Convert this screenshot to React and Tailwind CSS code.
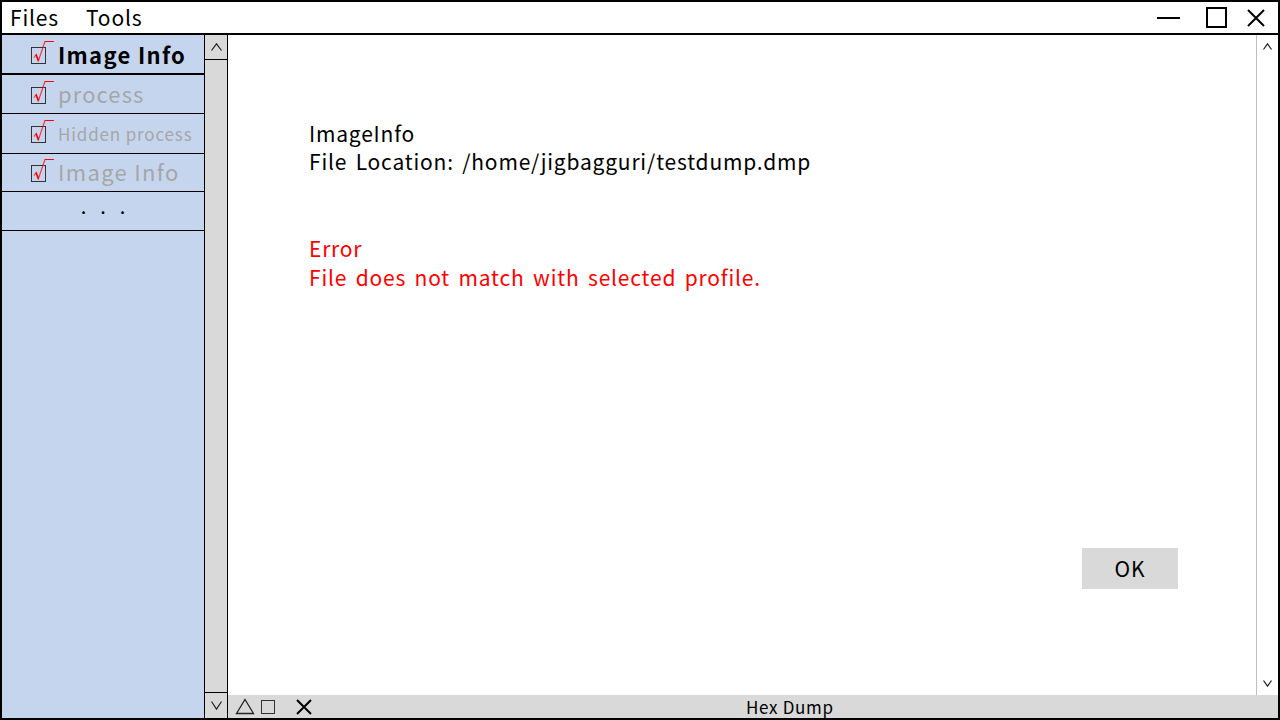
import { useState } from 'react'

const font = { fontFamily: '"Noto Sans CJK KR", "Noto Sans", sans-serif' }

function Check() {
  return (
    <span className="relative inline-block w-[15px] h-[17px] border border-[#333] bg-[#c5d5ee] shrink-0 mt-[2px]">
      <span className="absolute left-[1px] top-[-8px] text-[21px] leading-none text-[#ff0000]">√</span>
    </span>
  )
}

function Chevron({ up, w = 10, h = 7 }) {
  return (
    <svg width={w} height={h} viewBox={`0 0 ${w} ${h}`}>
      <path
        d={up ? `M0.5 ${h - 0.5} L${w / 2} 0.8 L${w - 0.5} ${h - 0.5}` : `M0.5 0.5 L${w / 2} ${h - 0.8} L${w - 0.5} 0.5`}
        fill="none"
        stroke="#222"
        strokeWidth="1.2"
      />
    </svg>
  )
}

export default function App() {
  const [items] = useState([
    { label: 'Image Info', cls: 'text-[22px] font-bold text-black tracking-[0.06em]', h: 'h-[40px] border-b-2' },
    { label: 'process', cls: 'text-[22px] text-[#a6a6a6] tracking-[0.05em] -mt-[2px]', h: 'h-[39px] border-b' },
    { label: 'Hidden process', cls: 'text-[17px] text-[#a6a6a6] tracking-[0.05em]', h: 'h-[40px] border-b' },
    { label: 'Image Info', cls: 'text-[22px] text-[#a6a6a6] tracking-[0.06em] -mt-[3px]', h: 'h-[38px] border-b' },
  ])

  return (
    <div style={font} className="w-[1280px] h-[720px] flex flex-col bg-white border-2 border-black overflow-hidden">
      {/* title / menu bar */}
      <div className="h-[33px] shrink-0 flex items-center border-b-2 border-black">
        <span className="ml-[8px] text-[21px] leading-none tracking-[0.04em]">Files</span>
        <span className="ml-[27px] text-[21px] leading-none tracking-[0.04em]">Tools</span>
        <div className="ml-auto flex items-center h-full">
          <span className="w-[23px] h-[2px] bg-black mr-[26px]"></span>
          <span className="w-[21px] h-[21px] border-2 border-black mr-[19px]"></span>
          <svg width="20" height="20" viewBox="0 0 20 20" className="mr-[12px]">
            <path d="M2 2 L18 18 M18 2 L2 18" stroke="black" strokeWidth="2" />
          </svg>
        </div>
      </div>

      <div className="flex flex-1 min-h-0">
        {/* sidebar */}
        <div className="w-[203px] shrink-0 bg-[#c5d5ee] border-r border-black flex flex-col">
          {items.map((it, i) => (
            <div key={i} className={`${it.h} flex items-center pl-[29px] gap-[12px] border-black`}>
              <Check />
              <span className={`${it.cls} leading-none`}>{it.label}</span>
            </div>
          ))}
          <div className="h-[39px] flex items-start justify-center border-b border-black pt-[4px] text-[20px] leading-none tracking-[14px] pl-[14px]">
            ...
          </div>
        </div>

        {/* left scrollbar */}
        <div className="w-[23px] shrink-0 bg-[#d9d9d9] border-r border-black flex flex-col justify-between">
          <div className="h-[25px] border-b border-black flex items-center justify-center">
            <Chevron up w={11} h={8} />
          </div>
          <div className="h-[26px] border-t border-black flex items-center justify-center">
            <Chevron w={11} h={9} />
          </div>
        </div>

        {/* main */}
        <div className="flex-1 flex flex-col min-w-0">
          <div className="flex-1 flex min-h-0">
            <div className="flex-1 relative pl-[81px] pt-[84px] tracking-[0.05em] [word-spacing:3px]">
              <div className="text-[21px] leading-[28px] text-black">
                <div>ImageInfo</div>
                <div>File Location: /home/jigbagguri/testdump.dmp</div>
              </div>
              <div className="mt-[59px] text-[21px] leading-[29px] text-[#ff0000]">
                <div>Error</div>
                <div>File does not match with selected profile.</div>
              </div>
              <button className="absolute left-[854px] top-[513px] w-[96px] h-[41px] bg-[#d9d9d9] text-[21px] leading-none text-black tracking-[0.04em]">
                OK
              </button>
            </div>
            <div className="w-[22px] shrink-0 border-l border-[#bfbfbf] flex flex-col justify-between items-center pt-[8px] pb-[8px]">
              <Chevron up w={9} h={7} />
              <Chevron w={9} h={7} />
            </div>
          </div>
          <div className="h-[23px] shrink-0 bg-[#d9d9d9] flex items-center">
            <svg width="20" height="17" viewBox="0 0 20 17" className="ml-[7px]">
              <path d="M10 1.5 L18.5 15.5 L1.5 15.5 Z" fill="none" stroke="#222" strokeWidth="1.3" />
            </svg>
            <span className="ml-[6px] w-[14px] h-[14px] border-[1.5px] border-[#333]"></span>
            <svg width="16" height="16" viewBox="0 0 16 16" className="ml-[21px]">
              <path d="M1 1 L15 15 M15 1 L1 15" stroke="black" strokeWidth="2" />
            </svg>
            <span className="ml-[434px] text-[17px] leading-none tracking-[0.04em]">Hex Dump</span>
          </div>
        </div>
      </div>
    </div>
  )
}
